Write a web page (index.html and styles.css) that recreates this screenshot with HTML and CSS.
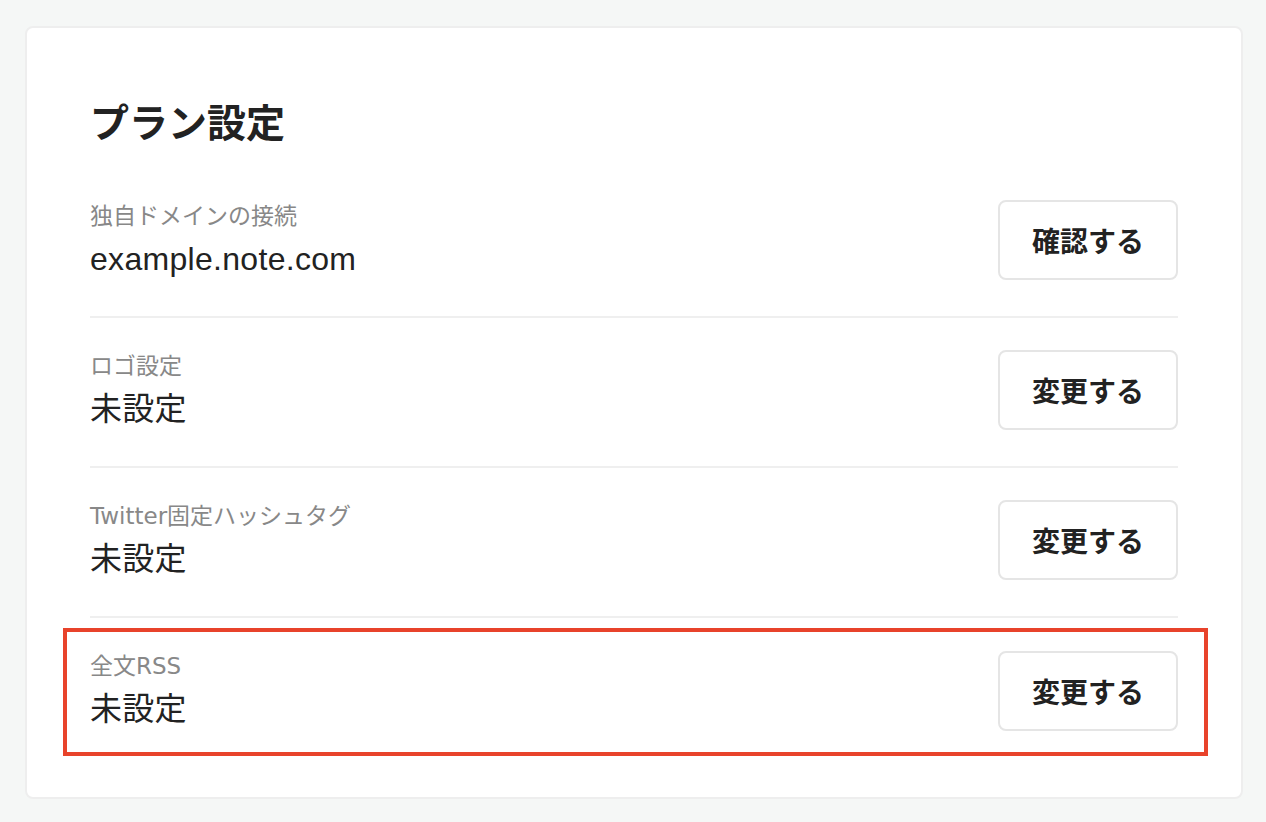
FILE: index.html
```html
<!DOCTYPE html>
<html lang="ja">
<head>
<meta charset="utf-8">
<title>プラン設定</title>
<link rel="stylesheet" href="styles.css">
</head>
<body>
<div class="page">
  <section class="card">
    <h1 class="title">プラン設定</h1>
    <div class="rows">
      <div class="row">
        <div class="info">
          <div class="label">独自ドメインの接続</div>
          <div class="value">example.note.com</div>
        </div>
        <button class="btn">確認する</button>
      </div>
      <div class="row">
        <div class="info">
          <div class="label">ロゴ設定</div>
          <div class="value">未設定</div>
        </div>
        <button class="btn">変更する</button>
      </div>
      <div class="row">
        <div class="info">
          <div class="label">Twitter固定ハッシュタグ</div>
          <div class="value">未設定</div>
        </div>
        <button class="btn">変更する</button>
      </div>
      <div class="row highlighted">
        <div class="info">
          <div class="label">全文RSS</div>
          <div class="value">未設定</div>
        </div>
        <button class="btn">変更する</button>
        <div class="highlight"></div>
      </div>
    </div>
  </section>
</div>
</body>
</html>
```

FILE: styles.css
```css
* { box-sizing: border-box; }
html, body { margin: 0; padding: 0; }
body {
  background: #f5f7f6;
  font-family: "Noto Sans CJK JP", "Noto Sans", sans-serif;
  color: #222;
  width: 1266px;
  height: 822px;
  overflow: hidden;
}
.page {
  padding: 26px 23px 23px 25px;
}
.card {
  background: #fff;
  border: 2px solid #eeeeee;
  border-radius: 8px;
  height: 773px;
  padding: 65px 63px 0 63px;
}
.title {
  margin: 0;
  font-size: 39px;
  line-height: 54px;
  font-weight: 700;
  color: #222;
}
.rows {
  margin-top: 21px;
}
.row {
  position: relative;
  display: flex;
  align-items: center;
  justify-content: space-between;
  height: 150px;
  padding: 0 0 4px;
  border-bottom: 2px solid #efefef;
}
.row:last-child { border-bottom: none; }
.info {
  align-self: flex-start;
  padding-top: 29px;
  display: flex;
  flex-direction: column;
}
.label {
  font-family: "DejaVu Sans", "Noto Sans CJK JP", sans-serif;
  font-size: 23px;
  line-height: 38px;
  margin-bottom: -2px;
  color: #888;
}
.value {
  font-family: "Liberation Sans", "Noto Sans CJK JP", sans-serif;
  font-size: 32px;
  line-height: 52px;
  letter-spacing: 0.3px;
  color: #222;
}
.btn {
  width: 180px;
  height: 80px;
  background: #fff;
  border: 2px solid #e5e5e5;
  border-radius: 8px;
  font-family: "Noto Sans CJK JP", sans-serif;
  font-size: 28px;
  font-weight: 700;
  color: #222;
  padding: 0;
}
.highlight {
  position: absolute;
  left: -27px;
  right: -30px;
  top: 10px;
  bottom: 12px;
  border: 4px solid #e8432b;
  pointer-events: none;
}
```
